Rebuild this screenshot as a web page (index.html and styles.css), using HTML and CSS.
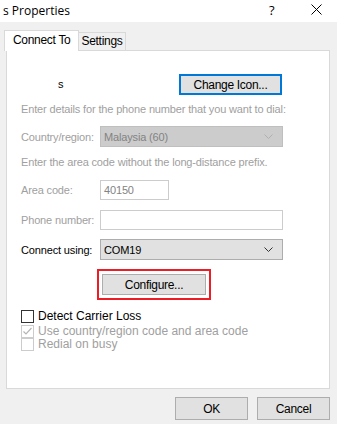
FILE: index.html
```html
<!DOCTYPE html>
<html lang="en">
<head>
  <meta charset="UTF-8" />
  <title>s Properties</title>
  <link rel="stylesheet" href="styles.css">
</head>
<body>
  <div class="titlebar">
    <span class="title">s Properties</span>
    <span class="help">?</span>
    <span class="close">
      <svg width="11" height="11" viewBox="0 0 11 11"><path d="M0.5 0.5 L10.5 10.5 M10.5 0.5 L0.5 10.5" stroke="#000" stroke-width="1"/></svg>
    </span>
  </div>

  <div class="tabs">
    <div class="tab active">Connect To</div>
    <div class="tab">Settings</div>
  </div>

  <div class="panel">
    <div class="row icon-row">
      <span class="entry-name">s</span>
      <button class="btn focused">Change Icon...</button>
    </div>

    <p class="hint disabled first">Enter details for the phone number that you want to dial:</p>

    <div class="row field country">
      <label class="disabled">Country/region:</label>
      <div class="select off">
        <span>Malaysia (60)</span>
        <svg width="9" height="5" viewBox="0 0 9 5"><path d="M0.5 0.5 L4.5 4.5 L8.5 0.5" fill="none" stroke="#b0b0b0"/></svg>
      </div>
    </div>

    <p class="hint disabled second">Enter the area code without the long-distance prefix.</p>

    <div class="row field area">
      <label class="disabled">Area code:</label>
      <div class="input short off">40150</div>
    </div>

    <div class="row field phone">
      <label class="disabled">Phone number:</label>
      <div class="input off"></div>
    </div>

    <div class="row field connect">
      <label>Connect using:</label>
      <div class="select">
        <span>COM19</span>
        <svg width="9" height="5" viewBox="0 0 9 5"><path d="M0.5 0.5 L4.5 4.5 L8.5 0.5" fill="none" stroke="#333"/></svg>
      </div>
    </div>

    <div class="highlight">
      <button class="btn">Configure...</button>
    </div>

    <div class="checks">
      <div class="check"><span class="box"></span>Detect Carrier Loss</div>
      <div class="check disabled"><span class="box off">
        <svg width="11" height="11" viewBox="0 0 11 11"><path d="M1.5 5.5 L4 8 L9.5 2" fill="none" stroke="#b5b5b5" stroke-width="1.2"/></svg>
      </span>Use country/region code and area code</div>
      <div class="check disabled"><span class="box off"></span>Redial on busy</div>
    </div>
  </div>

  <div class="actions">
    <button class="btn action">OK</button>
    <button class="btn action">Cancel</button>
  </div>
</body>
</html>
```

FILE: styles.css
```css
body {
  margin: 0;
  width: 337px;
  height: 424px;
  background-color: #f0f0f0;
  font-family: "Liberation Sans", Arial, sans-serif;
  font-size: 11px;
  letter-spacing: -0.15px;
  color: #000;
  overflow: hidden;
  white-space: nowrap;
}
.titlebar {
  height: 22px;
  background: #fff;
  display: flex;
  align-items: center;
  font-family: "Open Sans", "Liberation Sans", sans-serif;
  font-size: 12px;
  letter-spacing: 0;
}
.title {
  padding-left: 3px;
  flex: 1;
  margin-top: -2px;
}
.help {
  width: 12px;
  margin-right: 30px;
  font-size: 13px;
  margin-top: -2px;
}
.close {
  width: 11px;
  margin-right: 15px;
  display: flex;
  margin-top: -3px;
}
.tabs {
  display: flex;
  align-items: flex-end;
  margin-top: 7px;
  padding-left: 4px;
  height: 21px;
  font-size: 12px;
  letter-spacing: -0.3px;
}
.tab {
  height: 17px;
  line-height: 17px;
  padding: 0 3px;
  border: 1px solid #d9d9d9;
  border-bottom: none;
  background: #f0f0f0;
}
.tab.active {
  height: 20px;
  line-height: 18px;
  padding: 0 7px 0 8px;
  background: #fff;
  position: relative;
  z-index: 1;
  margin-bottom: -1px;
}
.tab.active + .tab {
  border-left: none;
}
.panel {
  margin-left: 6px;
  height: 337px;
  background: #fff;
  border: 1px solid #d9d9d9;
  padding-left: 14px;
  box-sizing: content-box;
  width: 308px;
}
.row {
  display: flex;
  align-items: center;
}
.icon-row {
  margin-top: 23px;
  height: 21px;
}
.entry-name {
  width: 158px;
  padding-left: 37px;
  box-sizing: border-box;
  margin-top: -2px;
}
.btn {
  font-family: "Liberation Sans", Arial, sans-serif;
  font-size: 12px;
  letter-spacing: -0.3px;
  color: #000;
  background: #e1e1e1;
  border: 1px solid #adadad;
  padding: 0;
  margin: 0;
}
.btn.focused {
  width: 103px;
  height: 21px;
  border: 2px solid #0078d7;
}
.disabled {
  color: #a0a0a0;
}
.hint {
  margin: 0;
  height: 15px;
  line-height: 15px;
}
.hint.first {
  margin-top: 7px;
}
.hint.second {
  margin-top: 8px;
}
.field label {
  width: 79px;
  flex-shrink: 0;
}
.country {
  margin-top: 9px;
  height: 21px;
}
.area {
  margin-top: 10px;
  height: 20px;
}
.phone {
  margin-top: 10px;
  height: 20px;
}
.connect {
  margin-top: 9px;
  height: 21px;
}
.select {
  width: 183px;
  height: 21px;
  box-sizing: border-box;
  background: #e1e1e1;
  border: 1px solid #adadad;
  display: flex;
  align-items: center;
  justify-content: space-between;
  padding: 0 9px 0 3px;
}
.select.off {
  background: #cccccc;
  border-color: #bfbfbf;
  color: #838383;
}
.input {
  width: 183px;
  height: 20px;
  box-sizing: border-box;
  border: 1px solid #cccccc;
  background: #fff;
  padding-left: 3px;
  line-height: 18px;
}
.input.short {
  width: 69px;
}
.input.off {
  color: #838383;
}
.highlight {
  margin-top: 9px;
  margin-left: 76px;
  width: 114px;
  height: 31px;
  box-sizing: border-box;
  border: 2px solid #ee1c24;
  padding: 3px 0 0 3px;
}
.highlight .btn {
  width: 104px;
  height: 21px;
}
.checks {
  margin-top: 9px;
  font-size: 12px;
  letter-spacing: 0;
}
.check {
  display: flex;
  align-items: center;
  height: 14px;
}
.check + .check {
  margin-top: 1px;
}
.check + .check + .check {
  margin-top: -1px;
}
.box {
  width: 13px;
  height: 13px;
  box-sizing: border-box;
  border: 1px solid #333;
  background: #fff;
  margin-right: 4px;
  display: flex;
  align-items: center;
  justify-content: center;
}
.box.off {
  border-color: #cccccc;
}
.actions {
  display: flex;
  justify-content: flex-end;
  gap: 9px;
  padding-right: 7px;
  margin-top: 8px;
}
.btn.action {
  width: 73px;
  height: 23px;
}
```
